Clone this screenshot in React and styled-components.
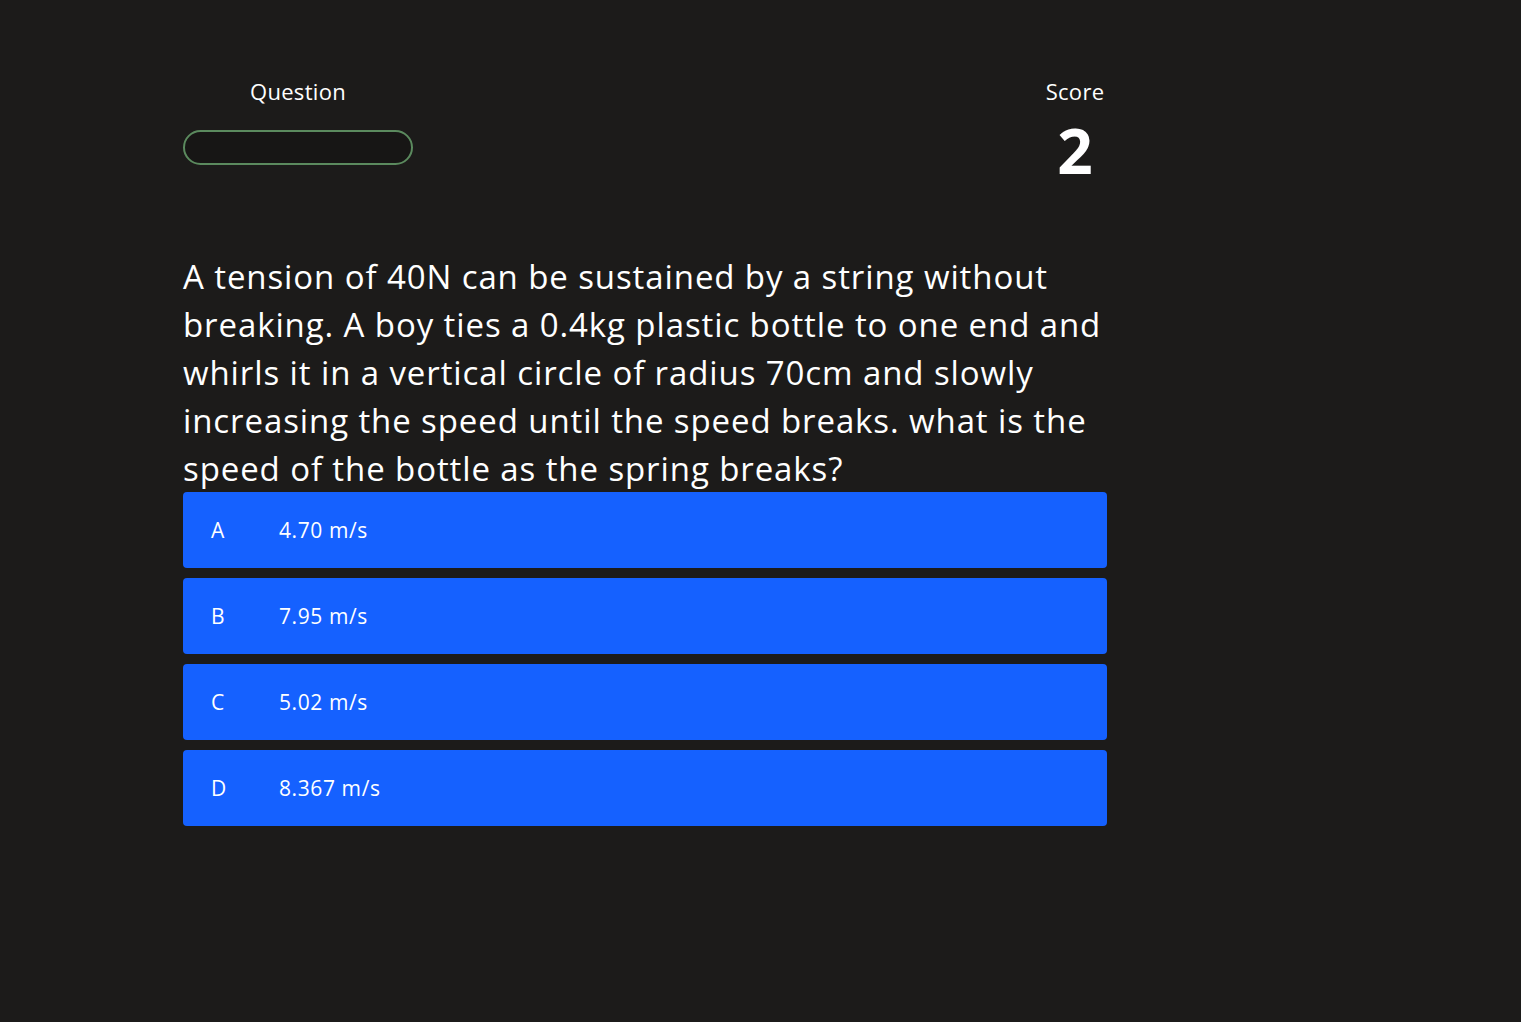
import styled, { createGlobalStyle } from 'styled-components';

const GlobalStyle = createGlobalStyle`
	html, body {
		margin: 0;
		padding: 0;
		background: #1c1b1a;
	}
	body {
		font-family: 'Comic Sans MS', 'Open Sans', 'Noto Sans', sans-serif;
		color: #ffffff;
	}
`;

// Styles Start
const Page = styled.main`
	min-height: 1022px;
	padding: 76px 0 0 183px;
	box-sizing: border-box;
`;
const Quiz = styled.section`
	width: 924px;
`;
const Header = styled.header`
	display: flex;
	justify-content: space-between;
	align-items: flex-start;
`;
const Column = styled.div`
	display: flex;
	flex-direction: column;
	align-items: center;
	width: ${({ $width }) => $width}px;
`;
const Label = styled.span`
	font-size: 22px;
	line-height: 30px;
	letter-spacing: 0.3px;
`;
const Progress = styled.div`
	width: 100%;
	height: 35px;
	margin-top: 24px;
	box-sizing: border-box;
	border: 2px solid #5b8a5e;
	border-radius: 18px;
	background: #171615;
	overflow: hidden;
`;
const ScoreValue = styled.span`
	font-size: 62px;
	font-weight: 700;
	line-height: 64px;
	margin-top: 12px;
`;
const QuestionText = styled.p`
	margin: 71px 0 0;
	font-size: 33px;
	line-height: 48px;
	letter-spacing: 0.9px;
`;
const Options = styled.ol`
	list-style: none;
	margin: -1px 0 0;
	padding: 0;
	display: flex;
	flex-direction: column;
	gap: 10px;
`;
const Option = styled.li`
	display: flex;
	align-items: center;
	height: 76px;
	padding-left: 28px;
	border-radius: 4px;
	background: #1561ff;
	font-size: 21px;
	letter-spacing: 0.6px;
	cursor: pointer;
`;
const Letter = styled.span`
	width: 68px;
`;
// Styles End

const options = [
	{ letter: 'A', text: '4.70 m/s' },
	{ letter: 'B', text: '7.95 m/s' },
	{ letter: 'C', text: '5.02 m/s' },
	{ letter: 'D', text: '8.367 m/s' },
];

const App = () => (
	<Page>
		<GlobalStyle />
		<Quiz>
			<Header>
				<Column $width={230}>
					<Label>Question</Label>
					<Progress />
				</Column>
				<Column $width={64}>
					<Label>Score</Label>
					<ScoreValue>2</ScoreValue>
				</Column>
			</Header>
			<QuestionText>
				A tension of 40N can be sustained by a string without breaking. A boy ties a 0.4kg
				plastic bottle to one end and whirls it in a vertical circle of radius 70cm and slowly
				increasing the speed until the speed breaks. what is the speed of the bottle as the
				spring breaks?
			</QuestionText>
			<Options>
				{options.map(({ letter, text }) => (
					<Option key={letter}>
						<Letter>{letter}</Letter>
						<span>{text}</span>
					</Option>
				))}
			</Options>
		</Quiz>
	</Page>
);

export default App;
